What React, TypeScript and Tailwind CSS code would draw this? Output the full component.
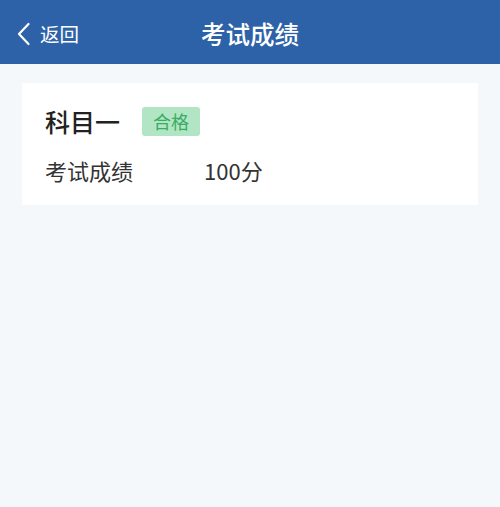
import React from "react";

export default function App() {
  return (
    <div
      className="w-[500px] h-[507px] bg-[#f4f8fb] flex flex-col"
      style={{ fontFamily: '"Noto Sans CJK SC", "Noto Sans", sans-serif' }}
    >
      {/* Header */}
      <header className="h-[64px] pt-[4px] bg-[#2d62a8] flex items-center relative shrink-0">
        <div className="flex items-center pl-[15px] gap-[7px] text-white">
          <svg width="18" height="26" viewBox="0 0 18 26" fill="none">
            <path d="M13.5 3 L4 13 L13.5 23" stroke="white" strokeWidth="2.2" strokeLinecap="round" strokeLinejoin="round" />
          </svg>
          <span className="text-[19.5px] leading-none">返回</span>
        </div>
        <h1 className="absolute left-1/2 -translate-x-1/2 text-white text-[24.5px] font-medium leading-none">
          考试成绩
        </h1>
      </header>

      {/* Card */}
      <div className="mx-[22px] mt-[19px] bg-white h-[122px] px-[23px] pt-[23px] flex flex-col">
        <div className="flex items-center gap-[22px] h-[30px]">
          <span className="text-[25px] leading-none text-[#222] font-medium">科目一</span>
          <span className="bg-[#b2e5c3] text-[#37ad63] text-[18px] leading-none px-[11px] h-[29px] flex items-center rounded-[3px]">
            合格
          </span>
        </div>
        <div className="flex items-center mt-[23px] text-[22px] leading-none text-[#333]">
          <span className="w-[159px]">考试成绩</span>
          <span>100分</span>
        </div>
      </div>
    </div>
  );
}
